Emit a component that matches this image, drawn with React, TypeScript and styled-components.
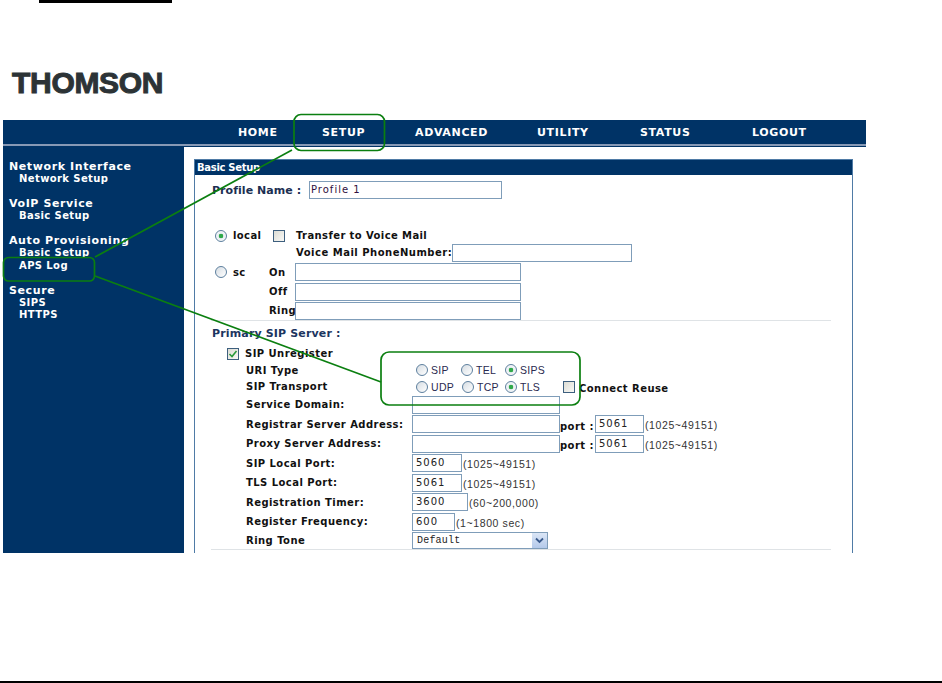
import styled, { createGlobalStyle } from 'styled-components'

const GlobalStyle = createGlobalStyle`
  html, body {
    margin: 0;
    background: #fff;
  }
  body {
    font-family: "DejaVu Sans", Verdana, sans-serif;
  }
`

const Page = styled.div`
  position: relative;
  width: 942px;
  height: 683px;
  overflow: hidden;
  display: flex;
  flex-direction: column;
`

const TopRule = styled.div`
  width: 133px;
  height: 3px;
  margin-left: 39px;
  background: #000;
`

const Logo = styled.div`
  margin: 64px 0 0 12px;
  height: 32px;
  font: bold 30px/32px "Liberation Sans", Arial, sans-serif;
  color: #2c3336;
  -webkit-text-stroke: 1px #2c3336;
  letter-spacing: -0.3px;
`

const Nav = styled.div`
  margin: 21px 0 0 3px;
  width: 863px;
  height: 24px;
  background: #003366;
  border-bottom: 2px solid #8799b5;
  box-shadow: 0 1px 0 #003366;
  display: grid;
  grid-template-columns: 235px 84px 93px 122px 103px 112px auto;
  align-items: center;
`

const NavItem = styled.span`
  font-size: 11px;
  font-weight: bold;
  color: #fff;
  letter-spacing: 0.65px;
`

const Main = styled.div`
  display: flex;
  margin: 1px 0 0 3px;
  height: 406px;
`

const Sidebar = styled.div`
  width: 181px;
  background: #003366;
  padding: 13px 0 0 6px;
  box-sizing: border-box;
  display: flex;
  flex-direction: column;
  gap: 11.5px;
`

const SideGroup = styled.div`
  display: flex;
  flex-direction: column;
`

const SideTitle = styled.div`
  font-size: 11px;
  line-height: 13px;
  font-weight: bold;
  color: #fff;
  letter-spacing: 0.6px;
`

const SideLink = styled.div`
  font-size: 10px;
  line-height: 12.5px;
  font-weight: bold;
  color: #fff;
  padding-left: 10px;
  letter-spacing: 0.4px;
`

const Panel = styled.div`
  width: 659px;
  margin: 12px 0 0 10px;
  box-sizing: border-box;
  border: 1px solid #4f7ba6;
  border-bottom: none;
  display: flex;
  flex-direction: column;
`

const PanelHead = styled.div`
  height: 15px;
  background: #003366;
  color: #fff;
  font-size: 10px;
  line-height: 15px;
  font-weight: bold;
  padding-left: 2px;
  letter-spacing: -0.3px;
`

const PanelBody = styled.div`
  padding: 6px 21px 0 16px;
  display: flex;
  flex-direction: column;
`

const Row = styled.div<{ $h: number; $indent?: number }>`
  display: flex;
  align-items: center;
  height: ${(p) => p.$h}px;
  padding-left: ${(p) => p.$indent ?? 0}px;
  flex: none;
`

const ProfileLabel = styled.span`
  width: 97px;
  margin-left: 1px;
  padding-top: 1px;
  font-size: 11px;
  font-weight: bold;
  color: #1c2f52;
  letter-spacing: 0.05px;
`

const SectionLabel = styled.span`
  margin-left: 1px;
  font-size: 11px;
  font-weight: bold;
  color: #1c3560;
  letter-spacing: 0.15px;
`

const Label = styled.span<{ $w?: number; $pl?: number; $pt?: number }>`
  font-size: 10px;
  font-weight: bold;
  color: #111;
  white-space: nowrap;
  letter-spacing: 0.45px;
  box-sizing: border-box;
  padding-left: ${(p) => p.$pl ?? 0}px;
  padding-top: ${(p) => p.$pt ?? 0}px;
  ${(p) => (p.$w ? `width: ${p.$w}px; flex: none;` : '')}
`

const Field = styled.input<{ $w: number }>`
  width: ${(p) => p.$w}px;
  height: 18px;
  box-sizing: border-box;
  flex: none;
  padding: 0 3px 1px;
  border: 1px solid #7f9db9;
  background: #fff;
  font: 10px "DejaVu Sans", sans-serif;
  letter-spacing: 1px;
  color: #222;
  outline: none;
  border-radius: 0;
`

const ProfileField = styled(Field)`
  padding-left: 1px;
  color: #301040;
`

const Hint = styled.span`
  margin-left: 1px;
  font: 10.5px "Liberation Sans", Arial, sans-serif;
  color: #333;
  letter-spacing: 0.6px;
  white-space: nowrap;
  padding-top: 2px;
`

const Radio = styled.span<{ $on?: boolean }>`
  width: 12px;
  height: 12px;
  box-sizing: border-box;
  flex: none;
  border-radius: 50%;
  border: 1px solid #5d7f9e;
  background: ${(p) =>
    p.$on
      ? 'radial-gradient(circle, #2fa84a 0 2px, #e8eef2 2.6px, #fff 100%)'
      : 'linear-gradient(135deg, #d6dde3, #fff)'};
`

const RadioText = styled.span<{ $w: number }>`
  width: ${(p) => p.$w}px;
  flex: none;
  padding-left: 3px;
  box-sizing: border-box;
  font: 10.5px "Liberation Sans", Arial, sans-serif;
  color: #2a2a50;
  letter-spacing: 0.3px;
`

const Check = styled.span`
  width: 12px;
  height: 12px;
  box-sizing: border-box;
  flex: none;
  border: 1px solid #3d5f7e;
  background: linear-gradient(135deg, #dcdcd4, #f8f8f5);
  display: flex;
  align-items: center;
  justify-content: center;
`

const ModeText = styled.span<{ $w: number; $pl?: number; $ls?: number }>`
  width: ${(p) => p.$w}px;
  flex: none;
  box-sizing: border-box;
  padding-left: ${(p) => p.$pl ?? 0}px;
  font-size: 10px;
  font-weight: bold;
  color: #111;
  letter-spacing: ${(p) => p.$ls ?? 0.4}px;
  white-space: nowrap;
`

const Divider = styled.div`
  height: 1px;
  flex: none;
  background: #dfe3e6;
`

const Select = styled.div`
  width: 136px;
  height: 17px;
  box-sizing: border-box;
  flex: none;
  border: 1px solid #7f9db9;
  display: flex;
  align-items: center;
  justify-content: space-between;
  padding-left: 4px;
  font: 10px "Liberation Mono", "Courier New", monospace;
  letter-spacing: 0.2px;
  color: #222;
`

const SelectArrow = styled.span`
  width: 15px;
  height: 15px;
  background: linear-gradient(#dbe6f6, #b4c9ea);
  display: flex;
  align-items: center;
  justify-content: center;
`

const Callouts = styled.svg`
  position: absolute;
  left: 0;
  top: 0;
  pointer-events: none;
`

const BottomRule = styled.div`
  position: absolute;
  left: 0;
  right: 0;
  top: 681px;
  height: 2px;
  background: #000;
`

const navItems = ['HOME', 'SETUP', 'ADVANCED', 'UTILITY', 'STATUS', 'LOGOUT']

const sideGroups = [
  { title: 'Network Interface', links: ['Network Setup'] },
  { title: 'VoIP Service', links: ['Basic Setup'] },
  { title: 'Auto Provisioning', links: ['Basic Setup', 'APS Log'] },
  { title: 'Secure', links: ['SIPS', 'HTTPS'] },
]

const labelWidth = 166

export default function App() {
  return (
    <Page>
      <GlobalStyle />
      <TopRule />
      <Logo>THOMSON</Logo>
      <Nav>
        <span />
        {navItems.map((item) => (
          <NavItem key={item}>{item}</NavItem>
        ))}
      </Nav>
      <Main>
        <Sidebar>
          {sideGroups.map((group) => (
            <SideGroup key={group.title}>
              <SideTitle>{group.title}</SideTitle>
              {group.links.map((link) => (
                <SideLink key={link}>{link}</SideLink>
              ))}
            </SideGroup>
          ))}
        </Sidebar>
        <Panel>
          <PanelHead>Basic Setup</PanelHead>
          <PanelBody>
            <Row $h={18}>
              <ProfileLabel>Profile Name :</ProfileLabel>
              <ProfileField $w={193} defaultValue="Profile 1" />
            </Row>
            <Row $h={29} />
            <Row $h={15} $indent={4}>
              <Radio $on />
              <ModeText $w={46} $pl={6}>local</ModeText>
              <Check />
              <ModeText $w={150} $pl={11}>Transfer to Voice Mail</ModeText>
            </Row>
            <Row $h={19} $indent={85}>
              <ModeText $w={156} $ls={0.5}>Voice Mail PhoneNumber:</ModeText>
              <Field $w={180} />
            </Row>
            <Row $h={20}>
              <Row $h={20} $indent={4}>
                <Radio />
                <ModeText $w={42} $pl={6}>sc</ModeText>
              </Row>
              <ModeText $w={26}>On</ModeText>
              <Field $w={226} />
            </Row>
            <Row $h={19} $indent={58}>
              <ModeText $w={26}>Off</ModeText>
              <Field $w={226} />
            </Row>
            <Row $h={19} $indent={58}>
              <ModeText $w={26}>Ring</ModeText>
              <Field $w={226} />
            </Row>
            <Divider />
            <Row $h={24}>
              <SectionLabel>Primary SIP Server :</SectionLabel>
            </Row>
            <Row $h={17} $indent={16}>
              <Check>
                <svg width="10" height="10" viewBox="0 0 10 10">
                  <path d="M1.5 5 L4 7.5 L8.5 2" fill="none" stroke="#2a9a3a" strokeWidth="1.6" />
                </svg>
              </Check>
              <Label $pl={6}>SIP Unregister</Label>
            </Row>
            <Row $h={16} $indent={35}>
              <Label $w={170}>URI Type</Label>
              <Radio />
              <RadioText $w={33}>SIP</RadioText>
              <Radio />
              <RadioText $w={32}>TEL</RadioText>
              <Radio $on />
              <RadioText $w={40}>SIPS</RadioText>
            </Row>
            <Row $h={17} $indent={35}>
              <Label $w={170}>SIP Transport</Label>
              <Radio />
              <RadioText $w={34}>UDP</RadioText>
              <Radio />
              <RadioText $w={31}>TCP</RadioText>
              <Radio $on />
              <RadioText $w={46}>TLS</RadioText>
              <Check />
              <Label $pl={4} $pt={4}>Connect Reuse</Label>
            </Row>
            <Row $h={19} $indent={35}>
              <Label $w={labelWidth}>Service Domain:</Label>
              <Field $w={148} />
            </Row>
            <Row $h={20} $indent={35}>
              <Label $w={labelWidth}>Registrar Server Address:</Label>
              <Field $w={148} />
              <Label $w={35} $pt={4}>port :</Label>
              <Field $w={49} defaultValue="5061" />
              <Hint>(1025~49151)</Hint>
            </Row>
            <Row $h={19} $indent={35}>
              <Label $w={labelWidth}>Proxy Server Address:</Label>
              <Field $w={148} />
              <Label $w={35} $pt={4}>port :</Label>
              <Field $w={49} defaultValue="5061" />
              <Hint>(1025~49151)</Hint>
            </Row>
            <Row $h={20} $indent={35}>
              <Label $w={labelWidth}>SIP Local Port:</Label>
              <Field $w={50} defaultValue="5060" />
              <Hint>(1025~49151)</Hint>
            </Row>
            <Row $h={19} $indent={35}>
              <Label $w={labelWidth}>TLS Local Port:</Label>
              <Field $w={50} defaultValue="5061" />
              <Hint>(1025~49151)</Hint>
            </Row>
            <Row $h={20} $indent={35}>
              <Label $w={labelWidth}>Registration Timer:</Label>
              <Field $w={56} defaultValue="3600" />
              <Hint>(60~200,000)</Hint>
            </Row>
            <Row $h={19} $indent={35}>
              <Label $w={labelWidth}>Register Frequency:</Label>
              <Field $w={43} defaultValue="600" />
              <Hint>(1~1800 sec)</Hint>
            </Row>
            <Row $h={18} $indent={35}>
              <Label $w={labelWidth}>Ring Tone</Label>
              <Select>
                Default
                <SelectArrow>
                  <svg width="9" height="7" viewBox="0 0 9 7">
                    <path d="M1 1.5 L4.5 5 L8 1.5" fill="none" stroke="#3a5a8c" strokeWidth="1.8" />
                  </svg>
                </SelectArrow>
              </Select>
            </Row>
            <Divider />
          </PanelBody>
        </Panel>
      </Main>
      <BottomRule />
      <Callouts width="942" height="683" fill="none" stroke="#0b7f10" strokeWidth="1.7">
        <rect x="294" y="114.5" width="90.5" height="36" rx="7" />
        <rect x="3.5" y="257.5" width="91" height="23.5" rx="5" />
        <rect x="381" y="352" width="199" height="53" rx="8" />
        <path d="M292 150 L95 257" />
        <path d="M95 276 L381 382" />
      </Callouts>
    </Page>
  )
}
